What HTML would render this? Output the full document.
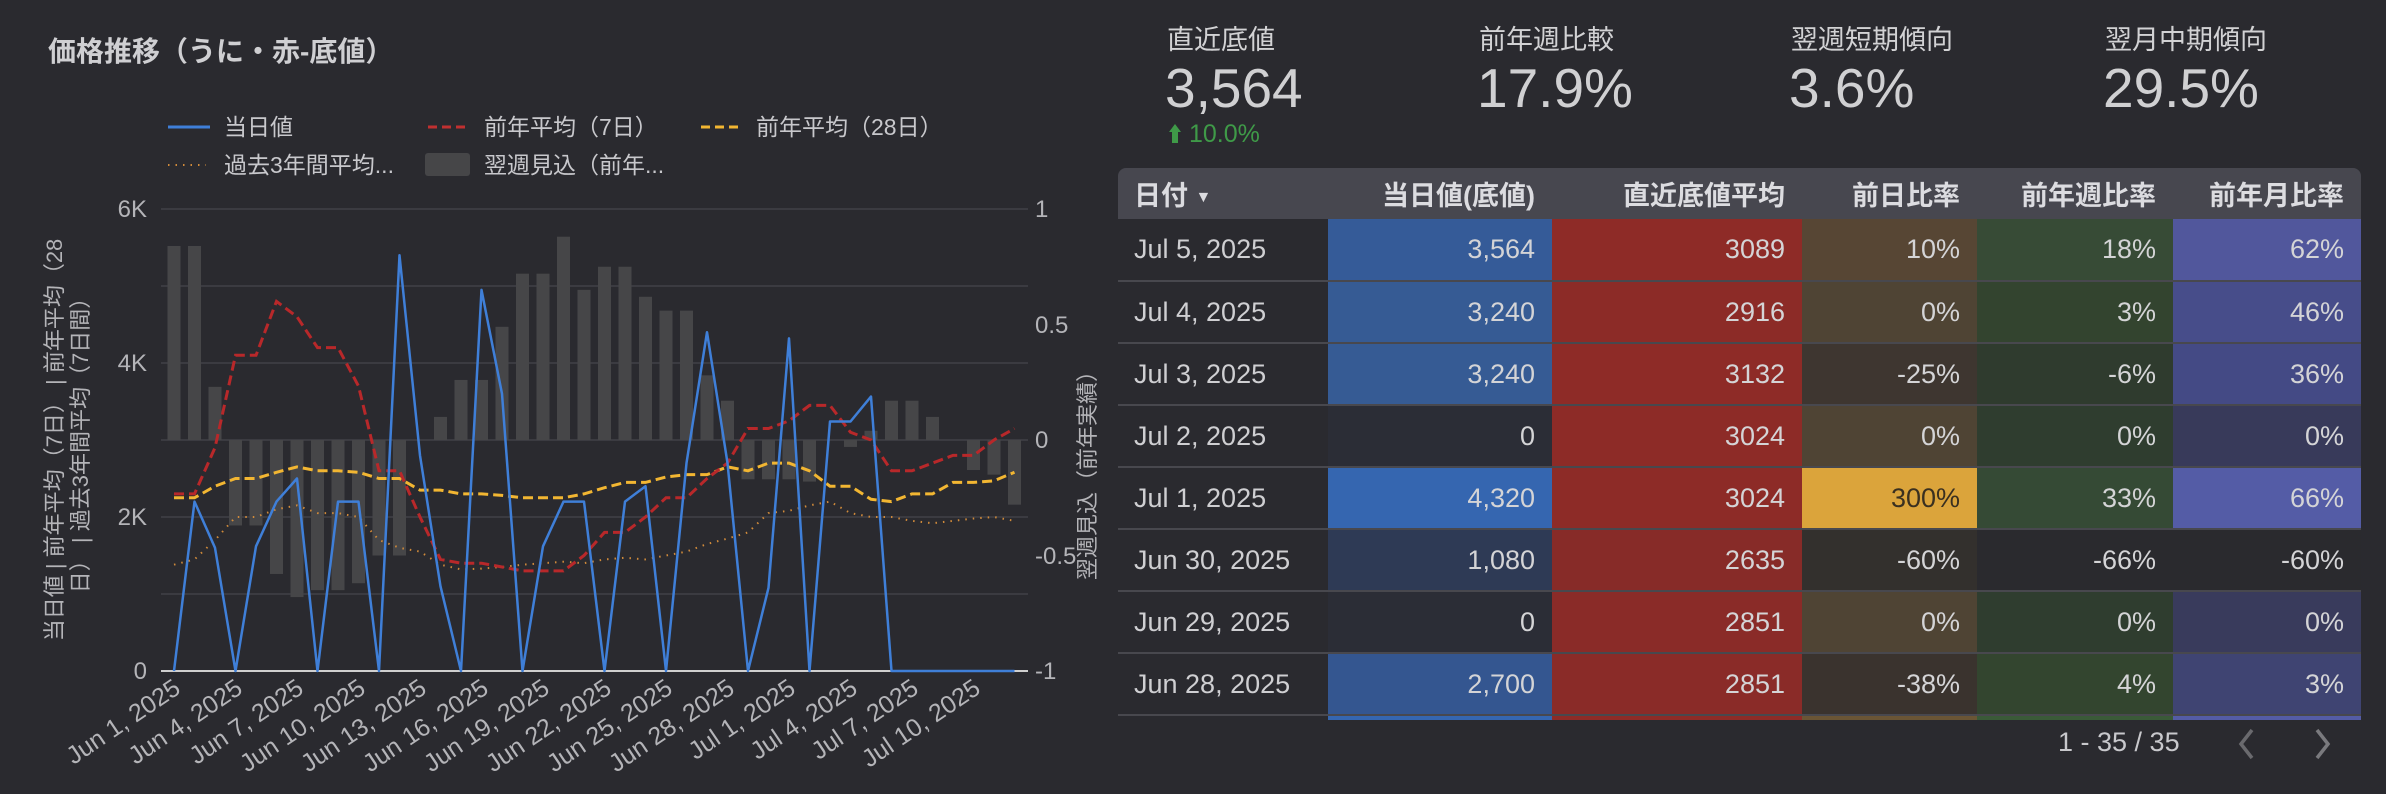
<!DOCTYPE html>
<html><head><meta charset="utf-8">
<style>
*{margin:0;padding:0;box-sizing:border-box}
body{width:2386px;height:794px;background:#2a2a2f;overflow:hidden;position:relative;font-family:"Liberation Sans","Noto Sans CJK JP",sans-serif;color:#cfcfd2}
.abs{position:absolute;white-space:nowrap}
.kl{font-size:27px;color:#d2d2d4;top:18px}
.kv{font-size:55px;color:#d0d0d2;top:56px}
table{position:absolute;left:1118px;top:168px;width:1243px;border-collapse:collapse;font-size:27px}
th{height:51px;background:#47474f;color:#dcdce0;font-weight:bold;text-align:right;padding:0 17px;font-size:27px}
th:first-child{text-align:left;border-top-left-radius:8px;padding-left:16px}
th:last-child{border-top-right-radius:8px}
td{height:62px;text-align:right;padding:0 17px;border-bottom:2px solid #48484e;color:#d4d4d6}
td:first-child{text-align:left;color:#cfcfd2;padding-left:16px}
</style></head><body>
<div class="abs" style="left:48px;top:30px;font-size:28px;font-weight:bold;color:#cfcfd2">価格推移（うに・赤-底値）</div>

<svg class="abs" style="left:0;top:0" width="1100" height="794" xmlns="http://www.w3.org/2000/svg" font-family="Liberation Sans, Noto Sans CJK JP, sans-serif">
<g font-size="23" fill="#c8c8cc">
<line x1="168" y1="127" x2="210" y2="127" stroke="#3f7fd8" stroke-width="3"/>
<text x="224" y="135">当日値</text>
<line x1="428" y1="127" x2="470" y2="127" stroke="#c03030" stroke-width="3" stroke-dasharray="9,5"/>
<text x="484" y="135">前年平均（7日）</text>
<line x1="701" y1="127" x2="743" y2="127" stroke="#f2b632" stroke-width="3" stroke-dasharray="9,5"/>
<text x="756" y="135">前年平均（28日）</text>
<line x1="168" y1="165" x2="206" y2="165" stroke="#d08a3a" stroke-width="2" stroke-dasharray="1.5,6"/>
<text x="224" y="173">過去3年間平均...</text>
<rect x="425" y="153" width="45" height="23" rx="3" fill="#464648"/>
<text x="484" y="173">翌週見込（前年...</text>
</g>
<g stroke="#3b3b41" stroke-width="2">
<line x1="161" y1="209" x2="1028" y2="209"/><line x1="161" y1="286" x2="1028" y2="286"/>
<line x1="161" y1="363" x2="1028" y2="363"/><line x1="161" y1="440" x2="1028" y2="440"/>
<line x1="161" y1="517" x2="1028" y2="517"/><line x1="161" y1="594" x2="1028" y2="594"/>
</g>
<g id="bars" fill="#464648"></g>
<line x1="161" y1="671" x2="1028" y2="671" stroke="#cfcfcf" stroke-width="2"/>
<path id="p3" fill="none" stroke="#d08a3a" stroke-width="2" stroke-dasharray="1.5,6"/>
<path id="p28" fill="none" stroke="#f2b632" stroke-width="3" stroke-dasharray="10,5"/>
<path id="p7" fill="none" stroke="#b8282a" stroke-width="3" stroke-dasharray="10,5"/>
<path id="pb" fill="none" stroke="#3f7fd8" stroke-width="2.5" stroke-linejoin="round"/>
<g font-size="24" fill="#b4b4b8" text-anchor="end">
<text x="147" y="217">6K</text><text x="147" y="371">4K</text><text x="147" y="525">2K</text><text x="147" y="679">0</text>
</g>
<g font-size="24" fill="#b4b4b8">
<text x="1035" y="217">1</text><text x="1035" y="333">0.5</text><text x="1035" y="448">0</text><text x="1035" y="564">-0.5</text><text x="1035" y="679">-1</text>
</g>
<g font-size="22" fill="#b4b4b8" text-anchor="middle">
<text transform="translate(62,440) rotate(-90)">当日値 | 前年平均（7日） | 前年平均（28</text>
<text transform="translate(88,440) rotate(-90)">日） | 過去3年間平均（7日間）</text>
<text transform="translate(1095,470) rotate(-90)">翌週見込（前年実績）</text>
</g>
<g font-size="25" fill="#b4b4b8" text-anchor="end">
<text transform="translate(182,692) rotate(-34)">Jun 1, 2025</text>
<text transform="translate(244,692) rotate(-34)">Jun 4, 2025</text>
<text transform="translate(305,692) rotate(-34)">Jun 7, 2025</text>
<text transform="translate(367,692) rotate(-34)">Jun 10, 2025</text>
<text transform="translate(428,692) rotate(-34)">Jun 13, 2025</text>
<text transform="translate(490,692) rotate(-34)">Jun 16, 2025</text>
<text transform="translate(551,692) rotate(-34)">Jun 19, 2025</text>
<text transform="translate(613,692) rotate(-34)">Jun 22, 2025</text>
<text transform="translate(674,692) rotate(-34)">Jun 25, 2025</text>
<text transform="translate(736,692) rotate(-34)">Jun 28, 2025</text>
<text transform="translate(797,692) rotate(-34)">Jul 1, 2025</text>
<text transform="translate(859,692) rotate(-34)">Jul 4, 2025</text>
<text transform="translate(920,692) rotate(-34)">Jul 7, 2025</text>
<text transform="translate(982,692) rotate(-34)">Jul 10, 2025</text>
</g>
</svg>
<script>
(function(){
var X=function(i){return 174+20.5*i},Y=function(v){return 671-v*0.077},R=function(r){return 440-r*231};
var blue=[0,2200,1600,0,1620,2200,2500,0,2200,2200,0,5400,2800,1100,0,4950,3600,0,1620,2200,2200,0,2200,2400,0,2700,4400,2700,0,1080,4320,0,3240,3240,3564,0,0,0,0,0,0,0];
var r7=[2300,2300,2900,4100,4100,4800,4600,4200,4200,3700,2600,2600,2000,1450,1400,1400,1350,1300,1300,1300,1500,1800,1800,2000,2250,2250,2500,2700,3150,3150,3250,3450,3450,3100,3000,2600,2600,2700,2800,2800,3000,3150];
var r28=[2250,2250,2400,2500,2500,2580,2650,2600,2600,2580,2500,2500,2350,2350,2300,2300,2280,2250,2250,2250,2300,2380,2450,2450,2520,2550,2550,2650,2600,2700,2700,2600,2400,2400,2230,2200,2300,2300,2450,2450,2470,2580];
var r3=[1380,1450,1700,2000,2000,2100,2150,2050,2050,2000,1700,1600,1550,1380,1320,1330,1350,1380,1400,1420,1400,1450,1470,1450,1500,1550,1650,1720,1800,2050,2080,2150,2200,2050,2000,2000,1950,1920,1950,1980,2000,1950];
var bars=[0.84,0.84,0.23,-0.37,-0.37,-0.58,-0.68,-0.65,-0.65,-0.62,-0.5,-0.5,0,0.1,0.26,0.26,0.49,0.72,0.72,0.88,0.65,0.75,0.75,0.62,0.56,0.56,0.28,0.17,-0.17,-0.17,-0.17,-0.18,0,-0.03,0.04,0.17,0.17,0.1,0,-0.13,-0.15,-0.28];
function d(a){return a.map(function(v,i){return (i?'L':'M')+X(i).toFixed(1)+' '+Y(v).toFixed(1)}).join('')}
document.getElementById('pb').setAttribute('d',d(blue));
document.getElementById('p7').setAttribute('d',d(r7));
document.getElementById('p28').setAttribute('d',d(r28));
document.getElementById('p3').setAttribute('d',d(r3));
var g=document.getElementById('bars'),s='';
bars.forEach(function(b,i){if(!b)return;var y1=R(b),y0=440;s+='<rect x="'+(X(i)-6.5)+'" y="'+Math.min(y0,y1)+'" width="13" height="'+Math.abs(y1-y0)+'"/>'});
g.innerHTML=s;
})();
</script>

<div class="abs kl" style="left:1167px">直近底値</div>
<div class="abs kl" style="left:1479px">前年週比較</div>
<div class="abs kl" style="left:1791px">翌週短期傾向</div>
<div class="abs kl" style="left:2105px">翌月中期傾向</div>
<div class="abs kv" style="left:1165px">3,564</div>
<div class="abs kv" style="left:1477px">17.9%</div>
<div class="abs kv" style="left:1789px">3.6%</div>
<div class="abs kv" style="left:2103px">29.5%</div>
<div class="abs" style="left:1168px;top:120px;font-size:25px;color:#3f9a48">
<svg width="14" height="22" style="vertical-align:-3px"><path d="M7 1 L13 9 H10 V20 H4 V9 H1 Z" fill="#3f9a48"/></svg> 10.0%</div>

<table>
<tr><th style="width:210px">日付 <span style="font-size:16px;vertical-align:3px">▼</span></th><th style="width:224px">当日値(底値)</th><th style="width:250px">直近底値平均</th><th style="width:175px">前日比率</th><th style="width:196px">前年週比率</th><th style="width:188px">前年月比率</th></tr>
<tr><td>Jul 5, 2025</td><td style="background:#355b98">3,564</td><td style="background:#8e2b27">3089</td><td style="background:#574634">10%</td><td style="background:#374b36">18%</td><td style="background:#51579c">62%</td></tr>
<tr><td>Jul 4, 2025</td><td style="background:#365b94">3,240</td><td style="background:#8c2b27">2916</td><td style="background:#4f4434">0%</td><td style="background:#33442f">3%</td><td style="background:#474d8a">46%</td></tr>
<tr><td>Jul 3, 2025</td><td style="background:#365b94">3,240</td><td style="background:#8e2b27">3132</td><td style="background:#3e3630">-25%</td><td style="background:#2f3b2e">-6%</td><td style="background:#444a85">36%</td></tr>
<tr><td>Jul 2, 2025</td><td style="background:#2b2d36">0</td><td style="background:#8d2b27">3024</td><td style="background:#4f4434">0%</td><td style="background:#2f3d2f">0%</td><td style="background:#383a5a">0%</td></tr>
<tr><td>Jul 1, 2025</td><td style="background:#3566b0">4,320</td><td style="background:#8d2b27">3024</td><td style="background:#dba43b;color:#3a3020">300%</td><td style="background:#354a35">33%</td><td style="background:#545ca6">66%</td></tr>
<tr><td>Jun 30, 2025</td><td style="background:#2e3a55">1,080</td><td style="background:#872b28">2635</td><td style="background:#33302d">-60%</td><td style="background:#2a2a2e">-66%</td><td style="background:#2a2a2e">-60%</td></tr>
<tr><td>Jun 29, 2025</td><td style="background:#2b2d36">0</td><td style="background:#8a2b28">2851</td><td style="background:#4f4434">0%</td><td style="background:#2f3d2f">0%</td><td style="background:#393b5c">0%</td></tr>
<tr><td>Jun 28, 2025</td><td style="background:#345690">2,700</td><td style="background:#8a2b28">2851</td><td style="background:#3a332e">-38%</td><td style="background:#33452f">4%</td><td style="background:#3f4472">3%</td></tr>
</table>
<div class="abs" style="left:1328px;top:716px;width:224px;height:4px;background:#3566b0"></div>
<div class="abs" style="left:1552px;top:716px;width:250px;height:4px;background:#8d2b27"></div>
<div class="abs" style="left:1802px;top:716px;width:175px;height:4px;background:#6a5535"></div>
<div class="abs" style="left:1977px;top:716px;width:196px;height:4px;background:#3a5a38"></div>
<div class="abs" style="left:2173px;top:716px;width:188px;height:4px;background:#545ca6"></div>

<div class="abs" style="left:2058px;top:727px;font-size:27px;color:#c8c8cc">1 - 35 / 35</div>
<svg class="abs" style="left:2230px;top:724px" width="120" height="40"><path d="M22 6 L11 20 L22 34" fill="none" stroke="#6a6a6e" stroke-width="3.5"/><path d="M87 6 L98 20 L87 34" fill="none" stroke="#7a7a7e" stroke-width="3.5"/></svg>
</body></html>
